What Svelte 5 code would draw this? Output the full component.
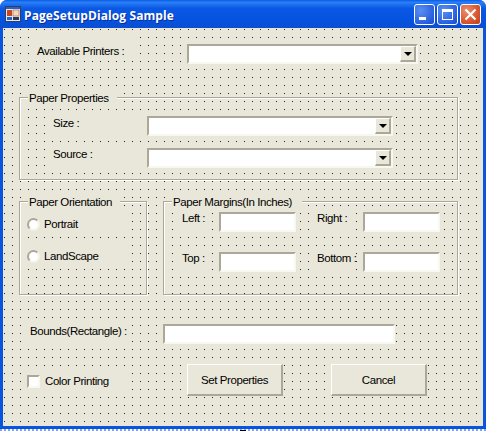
<script>
  const marginRows = [
    [{ label: 'Left :', cls: 'ml' }, { label: 'Right :', cls: 'mr' }],
    [{ label: 'Top :', cls: 'ml' }, { label: 'Bottom :', cls: 'mr' }]
  ];
</script>

<div class="window">
  <header class="titlebar">
    <svg class="appicon" width="16" height="16" viewBox="0 0 16 16">
      <rect x="0.5" y="0.5" width="15" height="15" fill="#dfe8f6" stroke="#30405c"/>
      <rect x="1" y="1" width="14" height="2" fill="#2a5fc8"/>
      <rect x="2" y="4" width="5" height="6" fill="#c8481c"/>
      <rect x="8" y="4" width="6" height="6" fill="#f4d8b8" stroke="#a06040" stroke-width="0.6"/>
      <rect x="2" y="11" width="5" height="3" fill="#2a5fc8"/>
      <rect x="8" y="11" width="6" height="3" fill="#303850"/>
    </svg>
    <span class="title">PageSetupDialog Sample</span>
    <div class="caption-buttons">
      <div class="cap blue">
        <svg width="21" height="21" viewBox="0 0 21 21"><rect x="5" y="13" width="7" height="3" fill="#fff"/></svg>
      </div>
      <div class="cap blue">
        <svg width="21" height="21" viewBox="0 0 21 21"><rect x="5.5" y="5.5" width="10" height="10" fill="none" stroke="#fff" stroke-width="1"/><rect x="5" y="5" width="11" height="3" fill="#fff"/></svg>
      </div>
      <div class="cap red">
        <svg width="21" height="21" viewBox="0 0 21 21"><path d="M5.5 5.5 L15.5 15.5 M15.5 5.5 L5.5 15.5" stroke="#fff" stroke-width="2.2" fill="none"/></svg>
      </div>
    </div>
  </header>

  <main class="client">
    <div class="row printers">
      <span class="lbl printers-lbl">Available Printers :</span>
      <div class="combo printer-combo"><div class="arrow"><i></i></div></div>
    </div>

    <fieldset class="group props">
      <legend class="lg-props">Paper Properties</legend>
      <div class="row prop-row">
        <span class="lbl prop-lbl">Size :</span>
        <div class="combo prop-combo"><div class="arrow"><i></i></div></div>
      </div>
      <div class="row prop-row second">
        <span class="lbl prop-lbl">Source :</span>
        <div class="combo prop-combo"><div class="arrow"><i></i></div></div>
      </div>
    </fieldset>

    <div class="row groups">
      <fieldset class="group orient">
        <legend class="lg-orient">Paper Orientation</legend>
        <div class="radio-row"><span class="radio"></span><span class="txt">Portrait</span></div>
        <div class="radio-row land"><span class="radio"></span><span class="txt">LandScape</span></div>
      </fieldset>
      <fieldset class="group margins">
        <legend class="lg-margins">Paper Margins(In Inches)</legend>
        {#each marginRows as row}
          <div class="margin-row">
            {#each row as f}
              <span class="lbl {f.cls}">{f.label}</span><div class="input"></div>
            {/each}
          </div>
        {/each}
      </fieldset>
    </div>

    <div class="row bounds">
      <span class="lbl bounds-lbl">Bounds(Rectangle) :</span>
      <div class="input bounds-input"></div>
    </div>

    <div class="row actions">
      <div class="checkline">
        <span class="check"></span>
        <span class="txt check-lbl">Color Printing</span>
      </div>
      <button class="btn first">Set Properties</button>
      <button class="btn">Cancel</button>
    </div>
  </main>
</div>
<div class="strip"></div>

<style>
  :global(body) {
    margin: 0;
    background: #fff;
  }
  .window {
    width: 486px;
    height: 429px;
    background: #0a55e0;
    border-radius: 7px 7px 0 0;
    display: flex;
    flex-direction: column;
    font-family: "Liberation Sans", Arial, sans-serif;
    font-size: 11.5px;
    letter-spacing: -0.42px;
    color: #000;
    overflow: hidden;
  }
  .strip {
    width: 486px;
    height: 2px;
    background:
      linear-gradient(#000, #000) no-repeat 240px 1px / 6px 1px,
      repeating-linear-gradient(90deg, #7fa4e8 0 2px, #fff 2px 4px);
  }
  .titlebar {
    height: 28px;
    flex: none;
    display: flex;
    align-items: center;
    padding: 0 5px 0 5px;
    box-sizing: border-box;
    background: linear-gradient(#0a5ae8 0, #2a80f5 8%, #0a58e4 30%, #0553e0 70%, #0a4fd0 100%);
  }
  .appicon {
    flex: none;
  }
  .title {
    margin: 2px 0 0 3px;
    color: #fff;
    font-family: "Open Sans", "DejaVu Sans", sans-serif;
    font-weight: 700;
    font-size: 12px;
    letter-spacing: 0.1px;
    text-shadow: 1px 1px 0 #0a2f9a;
  }
  .caption-buttons {
    margin-left: auto;
    display: flex;
    gap: 2px;
  }
  .cap {
    width: 21px;
    height: 21px;
    box-sizing: border-box;
    border: 1px solid #fff;
    border-radius: 3px;
    overflow: hidden;
  }
  .cap svg {
    display: block;
    margin: -1px;
  }
  .blue {
    background: radial-gradient(circle at 30% 30%, #5a90f0, #2a5fe0 70%, #1e48c0);
  }
  .red {
    background: radial-gradient(circle at 30% 30%, #e89070, #d8562c 60%, #c0401c);
  }
  .client {
    margin: 0 3px 3px 3px;
    flex: 1;
    box-sizing: border-box;
    background-color: #e9e7d9;
    background-image: conic-gradient(at 1px 1px, transparent 75%, #222 0);
    background-size: 8px 8px;
    background-position: 1px 1px;
    padding: 9px 0 0 16px;
    display: flex;
    flex-direction: column;
  }
  .row {
    display: flex;
    align-items: flex-start;
  }
  .lbl {
    box-sizing: border-box;
    background: #e9e7d9;
    white-space: nowrap;
    line-height: 13px;
    flex: none;
  }
  .txt {
    white-space: nowrap;
    line-height: 13px;
  }
  .printers-lbl {
    margin-left: 11px;
    width: 106px;
    height: 23px;
    padding: 8px 0 0 7px;
  }
  .combo {
    height: 20px;
    box-sizing: border-box;
    background: #fff;
    border: 2px solid;
    border-color: #aca899 #f8f7f0 #f8f7f0 #aca899;
    position: relative;
    flex: none;
  }
  .printer-combo {
    width: 231px;
    margin: 7px 0 0 51px;
  }
  .prop-combo {
    width: 246px;
    margin-top: 5px;
  }
  .arrow {
    position: absolute;
    right: 0;
    top: 0;
    bottom: 0;
    width: 16px;
    box-sizing: border-box;
    background: #e9e7d9;
    border-top: 1px solid #fff;
    border-left: 1px solid #fff;
    border-right: 2px solid #aca899;
    border-bottom: 2px solid #aca899;
    display: flex;
    align-items: center;
    justify-content: center;
  }
  .arrow i {
    width: 0;
    height: 0;
    border: 4px solid transparent;
    border-top-color: #000;
    border-bottom: 0;
  }
  .group {
    margin: 0;
    padding: 0;
    box-sizing: border-box;
    border: 1px solid #aca899;
    box-shadow: 1px 1px 0 #fff, inset 1px 1px 0 #fff;
    flex: none;
  }
  legend {
    margin-left: 8px;
    padding: 2px 8px 0 1px;
    background: #e9e7d9;
    line-height: 13px;
    height: 15px;
    box-sizing: border-box;
    white-space: nowrap;
  }
  .lg-margins {
    padding-right: 10px;
  }
  .props {
    width: 439px;
    height: 90px;
    margin-top: 26px;
  }
  .prop-row {
    margin: 6px 0 0 26px;
  }
  .prop-lbl {
    width: 101px;
    height: 24px;
    padding: 6px 0 0 7px;
  }
  .prop-row.second {
    margin-top: 7px;
  }
  .prop-row.second .prop-lbl {
    padding-top: 5px;
  }
  .groups {
    margin-top: 14px;
    gap: 16px;
  }
  .orient {
    width: 128px;
    height: 101px;
  }
  .margins {
    width: 295px;
    height: 101px;
  }
  .radio-row {
    display: flex;
    align-items: center;
    width: 106px;
    height: 22px;
    margin: 4px 0 0 4px;
    padding-left: 3px;
    box-sizing: border-box;
    background: #e9e7d9;
  }
  .radio-row.land {
    margin-top: 10px;
  }
  .radio {
    width: 13px;
    height: 13px;
    box-sizing: border-box;
    border-radius: 50%;
    background: #fff;
    border: 2px solid #aca899;
    border-right-color: #f4f3ea;
    border-bottom-color: #f4f3ea;
    margin-right: 4px;
    flex: none;
  }
  .margin-row {
    display: flex;
    align-items: flex-start;
    height: 23px;
    margin-left: 12px;
  }
  .margin-row + .margin-row {
    margin-top: 17px;
  }
  .ml {
    width: 34px;
    height: 23px;
    padding: 3px 0 0 6px;
    margin-right: 9px;
  }
  .mr {
    width: 41px;
    height: 23px;
    padding: 3px 0 0 6px;
    margin: 0 11px 0 15px;
  }
  .input {
    height: 20px;
    width: 77px;
    margin-top: 3px;
    box-sizing: border-box;
    background: #fff;
    border: 2px solid;
    border-color: #aca899 #f8f7f0 #f8f7f0 #aca899;
    flex: none;
  }
  .bounds {
    margin-top: 25px;
  }
  .bounds-lbl {
    width: 103px;
    height: 24px;
    margin-left: 4px;
    padding: 5px 0 0 7px;
  }
  .bounds-input {
    width: 232px;
    margin: 4px 0 0 37px;
  }
  .actions {
    margin-top: 20px;
  }
  .checkline {
    width: 104px;
    height: 24px;
    margin: 5px 0 0 5px;
    padding-left: 3px;
    box-sizing: border-box;
    background: #e9e7d9;
    display: flex;
    align-items: center;
    flex: none;
  }
  .check {
    width: 13px;
    height: 13px;
    box-sizing: border-box;
    background: #fff;
    border: 2px solid;
    border-color: #aca899 #f8f7f0 #f8f7f0 #aca899;
    flex: none;
  }
  .check-lbl {
    margin-left: 5px;
  }
  .btn {
    width: 96px;
    height: 32px;
    box-sizing: border-box;
    padding: 0;
    background: #e9e7d9;
    border-style: solid;
    border-width: 1px 2px 2px 1px;
    border-color: #fff #aca899 #aca899 #fff;
    font: inherit;
    letter-spacing: inherit;
    color: #000;
    margin-left: 48px;
    flex: none;
  }
  .btn.first {
    margin-left: 59px;
  }
</style>
